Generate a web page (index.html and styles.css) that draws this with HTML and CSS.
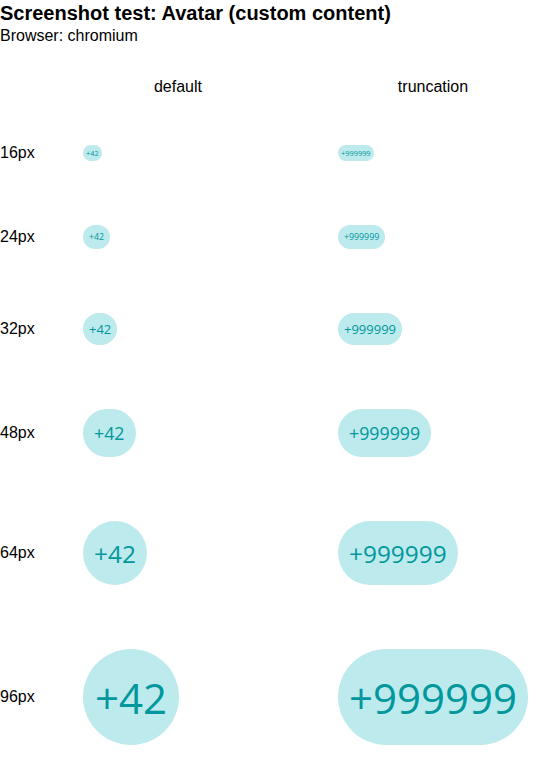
FILE: index.html
```html
<!DOCTYPE html>
<html>
<head>
<meta charset="utf-8">
<link rel="stylesheet" href="styles.css">
</head>
<body>
<h1 class="title">Screenshot test: Avatar (custom content)</h1>
<div class="subtitle">Browser: chromium</div>
<div class="table">
  <div class="row head">
    <div class="label"></div>
    <div class="col-head">default</div>
    <div class="col-head">truncation</div>
  </div>
  <div class="row s16">
    <div class="label">16px</div>
    <div class="cell"><span class="avatar">+42</span></div>
    <div class="cell"><span class="avatar">+999999</span></div>
  </div>
  <div class="row s24">
    <div class="label">24px</div>
    <div class="cell"><span class="avatar">+42</span></div>
    <div class="cell"><span class="avatar">+999999</span></div>
  </div>
  <div class="row s32">
    <div class="label">32px</div>
    <div class="cell"><span class="avatar">+42</span></div>
    <div class="cell"><span class="avatar">+999999</span></div>
  </div>
  <div class="row s48">
    <div class="label">48px</div>
    <div class="cell"><span class="avatar">+42</span></div>
    <div class="cell"><span class="avatar">+999999</span></div>
  </div>
  <div class="row s64">
    <div class="label">64px</div>
    <div class="cell"><span class="avatar">+42</span></div>
    <div class="cell"><span class="avatar">+999999</span></div>
  </div>
  <div class="row s96">
    <div class="label">96px</div>
    <div class="cell"><span class="avatar">+42</span></div>
    <div class="cell"><span class="avatar">+999999</span></div>
  </div>
</div>
</body>
</html>
```
FILE: styles.css
```css
html, body {
  margin: 0;
  padding: 0;
  background: #ffffff;
  color: #000000;
  font-family: "Liberation Sans", Arial, sans-serif;
}
.title {
  margin: 0;
  padding-top: 2px;
  font-size: 20px;
  font-weight: bold;
  line-height: 23px;
}
.subtitle {
  margin-top: 2px;
  font-size: 16px;
  line-height: 18px;
}
.table {
  margin-top: 16px;
}
.row {
  display: grid;
  grid-template-columns: 83px 255px 190px;
  align-items: center;
}
.head {
  height: 52px;
}
.col-head {
  width: 190px;
  text-align: center;
  font-size: 16px;
}
.label {
  font-size: 16px;
}
.cell {
  display: flex;
  align-items: center;
}
.avatar {
  display: inline-flex;
  align-items: center;
  justify-content: center;
  box-sizing: border-box;
  background: #bdeaec;
  color: #00979d;
  font-family: "Open Sans", sans-serif;
  white-space: nowrap;
}
.s16 { height: 80px; }
.s24 { height: 88px; }
.s32 { height: 96px; }
.s48 { height: 112px; }
.s64 { height: 128px; }
.s96 { height: 160px; }
.s16 .avatar { height: 16px; min-width: 16px; border-radius: 8px; padding: 0 3px; font-size: 7.4px; }
.s24 .avatar { height: 24px; min-width: 24px; border-radius: 12px; padding: 0 6px; font-size: 8.8px; }
.s32 .avatar { height: 32px; min-width: 32px; border-radius: 16px; padding: 0 6px; font-size: 13px; }
.s48 .avatar { height: 48px; min-width: 48px; border-radius: 24px; padding: 0 11px; font-size: 17.8px; }
.s64 .avatar { height: 64px; min-width: 64px; border-radius: 32px; padding: 0 11px; font-size: 24.4px; }
.s96 .avatar { height: 96px; min-width: 96px; border-radius: 48px; padding: 0 12px; font-size: 42px; }
```
